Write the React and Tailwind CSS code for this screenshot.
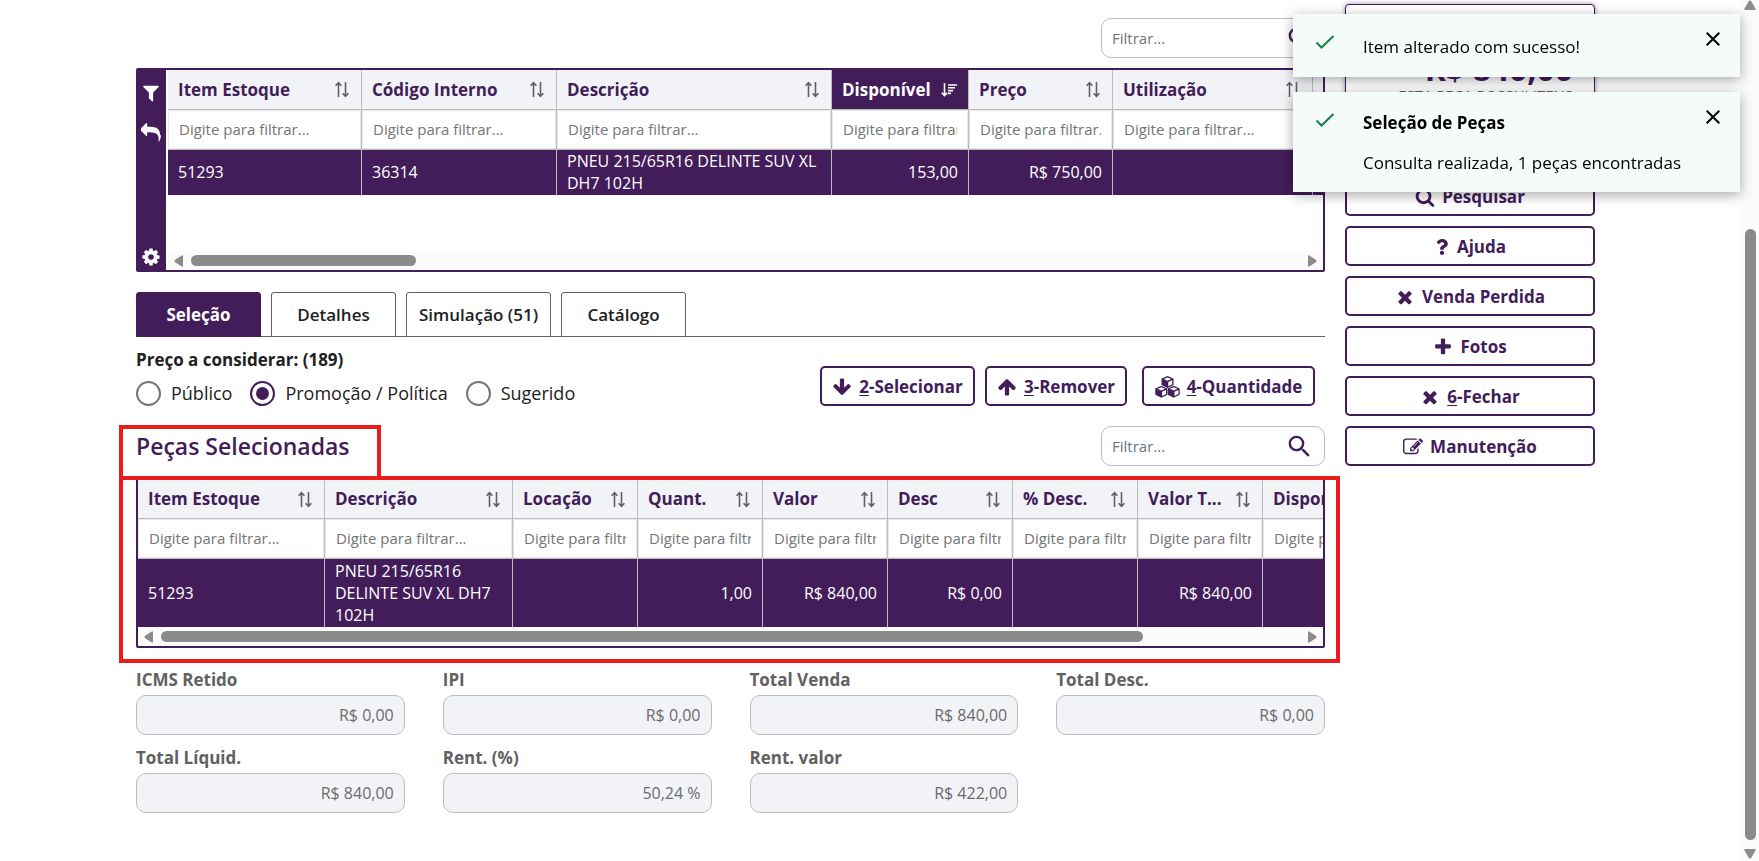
import { FaQuestion } from 'react-icons/fa'
import { MdSearch } from 'react-icons/md'

const PATHS = {
  filter: 'M1595 295q17 41-14 70l-493 493v742q0 42-39 59-13 5-25 5-27 0-45-19l-256-256q-19-19-19-45v-486l-493-493q-31-29-14-70 17-39 59-39h1280q42 0 59 39z',
  reply: 'M1792 1120q0 166-127 451-3 7-10.5 24t-13.5 30-13 22q-12 17-28 17-15 0-23.5-10t-8.5-25q0-9 2.5-26.5t2.5-23.5q5-68 5-123 0-112-19.5-200.5t-54-153.5-89-112-117-78.5-148-46.5-172-21.5-200-5.5h-224v256q0 26-19 45t-45 19-45-19l-512-512q-19-19-19-45t19-45l512-512q19-19 45-19t45 19 19 45v256h224q713 0 875 403 53 134 53 333z',
  cog: 'M1152 896q0-106-75-181t-181-75-181 75-75 181 75 181 181 75 181-75 75-181zm512-109v222q0 12-8 23t-20 13l-185 28q-19 54-39 91 35 50 107 138 10 12 10 25t-9 23q-27 37-99 108t-94 71q-12 0-26-9l-138-108q-44 23-91 38-16 136-29 186-7 28-36 28h-222q-14 0-24.5-8.5t-11.5-21.5l-28-184q-49-16-90-37l-141 107q-10 9-25 9-14 0-25-11-126-114-165-168-7-10-7-23 0-12 8-23 15-21 51-66.5t54-70.5q-27-50-41-99l-183-27q-13-2-21-12.5t-8-23.5v-222q0-12 8-23t19-13l186-28q14-46 39-92-40-57-107-138-10-12-10-24 0-10 9-23 26-36 98.5-107.5t94.5-71.5q13 0 26 10l138 107q44-23 91-38 16-136 29-186 7-28 36-28h222q14 0 24.5 8.5t11.5 21.5l28 184q49 16 90 37l142-107q9-9 24-9 13 0 25 10 129 119 165 170 7 8 7 22 0 12-8 23-15 21-51 66.5t-54 70.5q26 50 41 98l183 28q13 2 21 12.5t8 23.5z',
  search: 'M1216 832q0-185-131.5-316.5t-316.5-131.5-316.5 131.5-131.5 316.5 131.5 316.5 316.5 131.5 316.5-131.5 131.5-316.5zm512 832q0 52-38 90t-90 38q-54 0-90-38l-343-342q-179 124-399 124-143 0-273.5-55.5t-225-150-150-225-55.5-273.5 55.5-273.5 150-225 225-150 273.5-55.5 273.5 55.5 225 150 150 225 55.5 273.5q0 220-124 399l343 343q37 37 37 90z',
  down: 'M1675 832q0 53-37 90l-651 652q-39 37-91 37-53 0-90-37l-651-652q-38-36-38-90 0-53 38-91l74-75q39-37 91-37 53 0 90 37l294 294v-704q0-52 38-90t90-38h128q52 0 90 38t38 90v704l294-294q37-37 90-37 52 0 91 37l75 75q37 39 37 91z',
  up: 'M1675 971q0 51-37 90l-75 75q-38 38-91 38-54 0-90-38l-294-293v704q0 52-37.5 84.5t-90.5 32.5h-128q-53 0-90.5-32.5t-37.5-84.5v-704l-294 293q-36 38-90 38t-90-38l-75-75q-38-38-38-90 0-53 38-91l651-651q35-37 90-37 54 0 91 37l651 651q37 39 37 91z',
  times: 'M1490 1322q0 40-28 68l-136 136q-28 28-68 28t-68-28l-294-294-294 294q-28 28-68 28t-68-28l-136-136q-28-28-28-68t28-68l294-294-294-294q-28-28-28-68t28-68l136-136q28-28 68-28t68 28l294 294 294-294q28-28 68-28t68 28l136 136q28 28 28 68t-28 68l-294 294 294 294q28 28 28 68z',
  plus: 'M1600 736v192q0 40-28 68t-68 28h-416v416q0 40-28 68t-68 28h-192q-40 0-68-28t-28-68v-416h-416q-40 0-68-28t-28-68v-192q0-40 28-68t68-28h416v-416q0-40 28-68t68-28h192q40 0 68 28t28 68v416h416q40 0 68 28t28 68z',
  edit: 'M888 1184l116-116-152-152-116 116v56h96v96h56zm440-720q-16-16-33 1l-350 350q-17 17-1 33t33-1l350-350q17-17 1-33zm80 594v190q0 119-84.5 203.5t-203.5 84.5h-832q-119 0-203.5-84.5t-84.5-203.5v-832q0-119 84.5-203.5t203.5-84.5h832q63 0 117 25 15 7 18 23 3 17-9 29l-49 49q-14 14-32 8-23-6-45-6h-832q-66 0-113 47t-47 113v832q0 66 47 113t113 47h832q66 0 113-47t47-113v-126q0-13 9-22l64-64q15-15 35-7t20 29zm-96-738l288 288-672 672h-288v-288zm444 132l-92 92-288-288 92-92q28-28 68-28t68 28l152 152q28 28 28 68t-28 68z',
}

function Icon({ name, className = 'size-5' }) {
  return (
    <svg viewBox="0 0 1792 1792" className={`shrink-0 ${className}`} fill="currentColor" aria-hidden="true">
      <path d={PATHS[name]} />
    </svg>
  )
}

function Cube({ x, y }) {
  return (
    <g transform={`translate(${x} ${y})`}>
      <path d="M6 0 12 2.6V9L6 12 0 9V2.6Z" fill="currentColor" />
      <path d="M6 1.4 9.8 3 6 4.7 2.2 3ZM6.8 6 10.7 4.2V8.3L6.8 10.2Z" fill="white" />
    </g>
  )
}

function CubesIcon() {
  return (
    <svg viewBox="0 0 25 22" className="h-[22px] w-[25px] shrink-0" aria-hidden="true">
      <Cube x={6.5} y={0} />
      <Cube x={0.3} y={9.8} />
      <Cube x={12.7} y={9.8} />
    </svg>
  )
}

function SortIcon({ active }) {
  return (
    <svg viewBox="0 0 16 17" className="h-[17px] w-4 shrink-0" fill="none" stroke="currentColor" strokeWidth="1.6" aria-hidden="true">
      {active ? (
        <path d="M3.5 2v12.5M.8 11.7l2.7 2.8 2.7-2.8M7 4h9M7 6.8h7M7 9.6h5M7 12.4h3" />
      ) : (
        <path d="M4.5 16V2M1.6 4.7l2.9-3 2.9 3M11.5 1v14M8.6 12.3l2.9 3 2.9-3" />
      )}
    </svg>
  )
}

const stockColumns = [
  { label: 'Item Estoque', width: 'w-[194px]', value: '51293' },
  { label: 'Código Interno', width: 'w-[195px]', value: '36314' },
  { label: 'Descrição', width: 'w-[275px]', value: 'PNEU 215/65R16 DELINTE SUV XL DH7 102H' },
  { label: 'Disponível', width: 'w-[137px]', value: '153,00', number: true, sorted: true },
  { label: 'Preço', width: 'w-[144px]', value: 'R$ 750,00', number: true },
  { label: 'Utilização', width: 'w-[200px]', value: '' },
  { label: '', width: 'w-[200px]', value: '' },
]

const selectedColumns = [
  { label: 'Item Estoque', width: 'w-[187px]', value: '51293' },
  { label: 'Descrição', width: 'w-[188px]', value: 'PNEU 215/65R16 DELINTE SUV XL DH7 102H' },
  { label: 'Locação', width: 'w-[125px]', value: '' },
  { label: 'Quant.', width: 'w-[125px]', value: '1,00', number: true },
  { label: 'Valor', width: 'w-[125px]', value: 'R$ 840,00', number: true },
  { label: 'Desc', width: 'w-[125px]', value: 'R$ 0,00', number: true },
  { label: '% Desc.', width: 'w-[125px]', value: '' },
  { label: 'Valor T...', width: 'w-[125px]', value: 'R$ 840,00', number: true },
  { label: 'Disponível', width: 'w-[125px]', value: '' },
]

const totals = [
  { id: 'icms', label: 'ICMS Retido', value: 'R$ 0,00' },
  { id: 'ipi', label: 'IPI', value: 'R$ 0,00' },
  { id: 'venda', label: 'Total Venda', value: 'R$ 840,00' },
  { id: 'desc', label: 'Total Desc.', value: 'R$ 0,00' },
  { id: 'liquido', label: 'Total Líquid.', value: 'R$ 840,00' },
  { id: 'rent', label: 'Rent. (%)', value: '50,24 %' },
  { id: 'rentValor', label: 'Rent. valor', value: 'R$ 422,00' },
]

function DataTable({ columns, width, headHeight, rowHeight }) {
  return (
    <table className={`table-fixed border-separate border-spacing-0 ${width}`}>
      <colgroup>
        {columns.map((c, i) => (
          <col key={i} className={c.width} />
        ))}
      </colgroup>
      <thead>
        <tr className={headHeight}>
          {columns.map((c, i) => (
            <th
              key={i}
              className={`border-r border-b border-[#bdbdbd] py-0 pr-[11px] pl-[10px] text-left text-[17px] font-bold ${
                c.sorted ? 'bg-[#421d5a] text-white' : 'bg-[#f2f3f7] text-[#421d5a]'
              }`}
            >
              <div className="flex items-center justify-between whitespace-nowrap">
                {c.label}
                <span className={c.sorted ? 'text-white' : 'text-[#616161]'}>
                  <SortIcon active={c.sorted} />
                </span>
              </div>
            </th>
          ))}
        </tr>
        <tr className="h-10">
          {columns.map((c, i) => (
            <td key={i} className="border-r border-b border-[#bdbdbd] p-0">
              <input
                type="text"
                aria-label={`Filtrar ${c.label}`}
                placeholder="Digite para filtrar..."
                className="block h-[39px] w-full border border-[#e8e8e8] bg-white px-[10px] pb-[2px] text-[15px] placeholder:text-[#757575]"
              />
            </td>
          ))}
        </tr>
      </thead>
      <tbody>
        <tr className={`bg-[#421d5a] text-base leading-[22px] text-white ${rowHeight}`}>
          {columns.map((c, i) => (
            <td key={i} className={`border-r border-[#bdbdbd] px-[10px] pt-0 pb-px ${c.number ? 'text-right' : ''}`}>
              {c.value}
            </td>
          ))}
        </tr>
      </tbody>
    </table>
  )
}

function HorizontalScroll({ thumb }) {
  return (
    <div className="flex h-[19px] items-center gap-2 bg-[#fbfbfb] px-[6px] text-[#8b8b8b]">
      <svg viewBox="0 0 9 12" className="h-3 w-[9px]" fill="currentColor" aria-hidden="true">
        <path d="M9 1.2v9.6Q9 12 7.8 11.6L.8 7Q0 6 .8 5L7.8.4Q9 0 9 1.2Z" />
      </svg>
      <div className="flex-1">
        <div className={`h-[11px] rounded-full bg-[#8b8b8b] ${thumb}`} />
      </div>
      <svg viewBox="0 0 9 12" className="h-3 w-[9px]" fill="currentColor" aria-hidden="true">
        <path d="M0 1.2v9.6Q0 12 1.2 11.6L8.2 7Q9 6 8.2 5L1.2.4Q0 0 0 1.2Z" />
      </svg>
    </div>
  )
}

function FilterBox({ label }) {
  return (
    <div className="flex h-10 w-56 items-center rounded-[10px] border border-[#bdbdbd] bg-white px-[10px]">
      <input
        type="search"
        aria-label={label}
        placeholder="Filtrar..."
        className="min-w-0 flex-1 text-[15px] placeholder:text-[#6c757d]"
      />
      <button type="button" aria-label="Buscar" className="text-[#421d5a]">
        <MdSearch className="size-[29px]" />
      </button>
    </div>
  )
}

function ActionButton({ icon, hotkey, label, className = '' }) {
  return (
    <button
      type="button"
      className={`flex h-10 items-center justify-center gap-[7px] rounded-[5px] border-2 border-[#421d5a] bg-white pt-[2px] text-[17px] font-bold text-[#421d5a] ${className}`}
    >
      {icon}
      <span>
        {hotkey && <span className="underline underline-offset-2">{hotkey}</span>}
        {label}
      </span>
    </button>
  )
}

function Toast({ title, text }) {
  return (
    <div
      role="status"
      className={`flex items-start bg-[#f4fbf8] pt-[18px] pr-5 pl-[22px] text-black shadow-[0_3px_12px_rgba(0,0,0,0.35)] ${
        title ? 'pb-[17px]' : 'pb-[18px]'
      }`}
    >
      <svg viewBox="0 0 20 16" className="mt-[2px] h-4 w-5 shrink-0" fill="none" stroke="#16824a" strokeWidth="2" aria-hidden="true">
        <path d="M1.5 8.5 6.5 13.5 18.5 2" />
      </svg>
      <div className={`flex flex-1 flex-col gap-4 pl-7 text-[17px] leading-6 ${title ? 'pt-px' : 'pt-[3px]'}`}>
        {title && <strong className="font-bold">{title}</strong>}
        <p>{text}</p>
      </div>
      <button type="button" aria-label="Fechar" className="text-black">
        <svg viewBox="0 0 14 14" className="size-[14px]" fill="none" stroke="currentColor" strokeWidth="2" aria-hidden="true">
          <path d="M.7.7 13.3 13.3M13.3.7.7 13.3" />
        </svg>
      </button>
    </div>
  )
}

function PageScroll() {
  return (
    <div className="sticky top-0 flex h-screen w-[18px] shrink-0 flex-col items-center bg-[#fbfbfb] pb-[2px] text-[#8b8b8b]">
      <svg viewBox="0 0 12 10" className="h-[10px] w-3" fill="currentColor" aria-hidden="true">
        <path d="M1.2 10h9.6Q12 10 11.6 8.8L7 .8Q6 0 5 .8L.4 8.8Q0 10 1.2 10Z" />
      </svg>
      <div className="flex w-[11px] flex-1 flex-col pt-[219px] pb-[9px]">
        <div className="flex-1 rounded-full bg-[#8b8b8b]" />
      </div>
      <svg viewBox="0 0 12 10" className="h-[10px] w-3" fill="currentColor" aria-hidden="true">
        <path d="M1.2 0h9.6Q12 0 11.6 1.2L7 9.2Q6 10 5 9.2L.4 1.2Q0 0 1.2 0Z" />
      </svg>
    </div>
  )
}

const tabs = ['Seleção', 'Detalhes', 'Simulação (51)', 'Catálogo']
const prices = ['Público', 'Promoção / Política', 'Sugerido']

export default function App() {
  return (
    <div className="flex min-h-screen bg-white font-['Open_Sans',sans-serif] text-[#212121]">
      <div className="flex min-w-0 flex-1 items-start gap-5 pr-[146px] pl-[136px]">
        <main className="flex min-w-0 flex-1 flex-col pt-[18px]">
          <div className="flex justify-end">
            <FilterBox label="Filtrar estoque" />
          </div>

          <div className="mt-[10px] flex min-h-[204px] rounded-[2px] border-2 border-[#421d5a]">
            <div className="mr-[2px] flex w-7 shrink-0 flex-col items-center bg-[#421d5a] pt-[13px] pr-[2px] text-white">
              <button type="button" aria-label="Filtros"><Icon name="filter" /></button>
              <button type="button" aria-label="Desfazer" className="mt-5"><Icon name="reply" /></button>
              <button type="button" aria-label="Configurações" className="mt-auto mb-[3px]"><Icon name="cog" /></button>
            </div>
            <div className="flex min-w-0 flex-1 flex-col justify-between overflow-hidden">
              <DataTable columns={stockColumns} width="w-[1345px]" headHeight="h-10" rowHeight="h-[45px]" />
              <HorizontalScroll thumb="w-[225px]" />
            </div>
          </div>

          <div role="tablist" className="mt-5 flex h-[45px] gap-[10px] border-b border-[#616161]">
            {tabs.map((t, i) => (
              <button
                key={t}
                role="tab"
                type="button"
                aria-selected={i === 0}
                className={`h-[45px] min-w-[125px] rounded-t-[3px] border px-3 text-[17px] ${
                  i === 0
                    ? 'border-[#421d5a] bg-[#421d5a] font-bold text-white'
                    : 'border-[#616161] bg-white font-semibold text-[#212121]'
                }`}
              >
                {t}
              </button>
            ))}
          </div>

          <div className="flex items-end justify-between pt-[11px] pr-[10px]">
            <fieldset>
              <legend className="mb-[9px] h-6 text-[17px] leading-6 font-bold">Preço a considerar: (189)</legend>
              <div className="flex gap-[18px]">
                {prices.map((p) => (
                  <label key={p} className="flex items-center gap-[10px] text-lg leading-[25px]">
                    <input
                      type="radio"
                      name="preco"
                      defaultChecked={p === 'Promoção / Política'}
                      className="size-[25px] appearance-none rounded-full border-2 border-[#757575] bg-clip-content p-1 checked:border-[#421d5a] checked:bg-[#421d5a]"
                    />
                    {p}
                  </label>
                ))}
              </div>
            </fieldset>
            <div className="flex gap-[10px]">
              <ActionButton icon={<Icon name="down" />} hotkey="2" label="-Selecionar" className="w-[155px]" />
              <ActionButton icon={<Icon name="up" />} hotkey="3" label="-Remover" className="w-[142px]" />
              <ActionButton icon={<CubesIcon />} hotkey="4" label="-Quantidade" className="ml-[5px] w-[173px]" />
            </div>
          </div>

          <section className="relative mt-5">
            <div className="flex items-center justify-between">
              <h2 className="text-[23px] font-semibold text-[#421d5a]">Peças Selecionadas</h2>
              <FilterBox label="Filtrar peças selecionadas" />
            </div>
            <div className="mt-3 overflow-hidden rounded-[2px] border-2 border-[#421d5a]">
              <DataTable columns={selectedColumns} width="w-[1250px]" headHeight="h-[39px]" rowHeight="h-[68px]" />
              <HorizontalScroll thumb="w-[982px]" />
            </div>
            <div className="pointer-events-none absolute -top-px -left-[17px] h-[55px] w-[262px] border-4 border-[#ea1c1c]" />
            <div className="pointer-events-none absolute top-[50px] -right-[15px] -bottom-[15px] -left-[17px] border-4 border-[#ea1c1c]" />
          </section>

          <div className="mt-5 grid grid-cols-4 gap-x-[38px] gap-y-[11px]">
            {totals.map((t) => (
              <div key={t.id} className="flex flex-col gap-[3px]">
                <label htmlFor={t.id} className="text-[17px] leading-6 font-bold text-[#616161]">{t.label}</label>
                <input
                  id={t.id}
                  type="text"
                  readOnly
                  defaultValue={t.value}
                  className="h-10 w-full rounded-[10px] border border-[#bdbdbd] bg-[#f2f3f7] px-[10px] text-right text-base text-[#6b6b6b]"
                />
              </div>
            ))}
          </div>
        </main>

        <aside className="flex w-[250px] shrink-0 flex-col gap-[10px] pt-1">
          <div className="flex h-[162px] flex-col items-end rounded-[4px] border border-[#421d5a] bg-white px-[21px] pt-[44px] shadow-[0_0_5px_rgba(66,29,90,0.5)]">
            <p className="text-[32px] leading-10 font-bold text-[#421d5a]">R$ 840,00</p>
            <p className="text-[15px] leading-3 whitespace-nowrap text-[#616161]">ESTA PEÇA POSSUI ITENS</p>
          </div>
          <ActionButton icon={<Icon name="search" />} label="Pesquisar" />
          <ActionButton icon={<FaQuestion className="size-4" />} label="Ajuda" />
          <ActionButton icon={<Icon name="times" />} label="Venda Perdida" />
          <ActionButton icon={<Icon name="plus" />} label="Fotos" />
          <ActionButton icon={<Icon name="times" />} hotkey="6" label="-Fechar" />
          <ActionButton icon={<Icon name="edit" />} label="Manutenção" />
        </aside>
      </div>

      <PageScroll />

      <div className="fixed top-[14px] right-[19px] flex w-[447px] flex-col gap-[15px]">
        <Toast text="Item alterado com sucesso!" />
        <Toast title="Seleção de Peças" text="Consulta realizada, 1 peças encontradas" />
      </div>
    </div>
  )
}
